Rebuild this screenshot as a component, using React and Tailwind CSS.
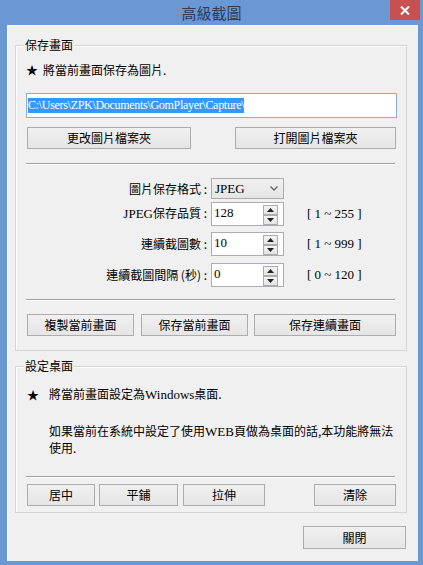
import React from 'react';

const serif = "font-['Liberation_Serif','Noto_Sans_CJK_TC',serif]";

const Btn = ({ className = '', children }) => (
  <div
    className={`h-[22px] flex items-center justify-center border border-[#acacac] bg-gradient-to-b from-[#f0f0f0] to-[#e5e5e5] text-[12px] ${className}`}
  >
    {children}
  </div>
);

const Separator = () => (
  <div className="h-[2px] border-t border-[#a0a0a0] border-b border-b-white mr-[2px]" />
);

const GroupLabel = ({ children }) => (
  <div className="absolute left-[8px] top-[-9px] px-[1px] bg-[#f0f0f0] leading-[16px] text-[12px]">
    {children}
  </div>
);

const Arrow = ({ up }) => (
  <div className="h-[10px] w-[15px] border border-[#acacac] bg-gradient-to-b from-[#f4f4f4] to-[#e4e4e4] flex items-center justify-center">
    <svg width="7" height="4" viewBox="0 0 7 4">
      {up ? <path d="M3.5 0 L7 4 L0 4 Z" fill="#222" /> : <path d="M0 0 L7 0 L3.5 4 Z" fill="#222" />}
    </svg>
  </div>
);

const Spin = ({ value }) => (
  <div className="w-[73px] h-full border border-[#abadb3] bg-white flex items-start justify-between pl-[2px] pr-[5px] pt-[2px]">
    <span className={`${serif} text-[13px] leading-[16px]`}>{value}</span>
    <div className="flex flex-col">
      <Arrow up />
      <Arrow />
    </div>
  </div>
);

const Row = ({ label, className, children, range }) => (
  <div className={`flex items-center ${className}`}>
    <div className="w-[181px] text-right text-[12px] whitespace-nowrap">{label}</div>
    <div className="ml-[4px] h-full flex">{children}</div>
    {range && <div className={`${serif} ml-[23px] text-[13px] whitespace-pre`}>{range}</div>}
  </div>
);

export default function App() {
  return (
    <div className="w-[423px] h-[565px] bg-[#6b97d3] flex flex-col font-['Noto_Sans_CJK_TC','Noto_Sans_CJK_SC',sans-serif] text-black">
      <div className="h-[25px] relative flex items-center justify-center">
        <span className="text-[15px] text-[#2d3b57] leading-none">高級截圖</span>
        <div className="absolute right-[3px] top-0 w-[30px] h-[20px] bg-[#c75050] flex items-center justify-center">
          <svg width="10" height="9" viewBox="0 0 10 9">
            <path d="M1 0.5 L9 8.5 M9 0.5 L1 8.5" stroke="#fff" strokeWidth="2" />
          </svg>
        </div>
      </div>

      <div className="ml-[7px] mr-[5px] h-[536px] bg-[#f0f0f0] border-t border-l border-[#fafafa] flex flex-col">
        {/* 保存畫面 */}
        <div className="mt-[19px] ml-[7px] w-[392px] h-[306px] relative border border-[#d5d5d5] shadow-[inset_1px_1px_0_#fff] flex flex-col pl-[10px] pr-[9px]">
          <GroupLabel>保存畫面</GroupLabel>
          <div className="mt-[16px] leading-[16px] text-[12px] flex items-center">
            <span className="text-[12px] mr-[5px]">★</span>
            <span>將當前畫面保存為圖片.</span>
          </div>
          <div className="mt-[15px] h-[25px] border border-[#89acd8] bg-white flex items-center pl-[1px]">
            <span className={`${serif} bg-[#3399ff] text-white text-[12px] leading-[15px] tracking-[-0.3px]`}>
              C:\Users\ZPK\Documents\GomPlayer\Capture\
            </span>
          </div>
          <div className="mt-[9px] flex ml-[1px]">
            <Btn className="w-[164px]">更改圖片檔案夾</Btn>
            <Btn className="w-[161px] ml-[44px]">打開圖片檔案夾</Btn>
          </div>
          <div className="mt-[14px]">
            <Separator />
          </div>

          <div className="-ml-[10px] flex flex-col">
            <Row label="圖片保存格式 :" className="mt-[13px] h-[21px] ml-[10px]">
              <div className="w-[73px] h-full border border-[#acacac] bg-gradient-to-b from-[#f0f0f0] to-[#e5e5e5] flex items-center justify-between pl-[3px] pr-[5px]">
                <span className={`${serif} text-[13px]`}>JPEG</span>
                <svg width="8" height="5" viewBox="0 0 8 5">
                  <path d="M0.5 0.5 L4 4 L7.5 0.5" stroke="#666" strokeWidth="1.4" fill="none" />
                </svg>
              </div>
            </Row>
            <Row
              label={<><span className={`${serif} text-[13px]`}>JPEG</span>保存品質 :</>}
              className="mt-[3px] h-[24px] ml-[10px]"
              range="[ 1 ~ 255 ]"
            >
              <Spin value="128" />
            </Row>
            <Row label="連續截圖數 :" className="mt-[6px] h-[24px] ml-[10px]" range="[ 1 ~ 999 ]">
              <Spin value="10" />
            </Row>
            <Row label="連續截圖間隔 (秒) :" className="mt-[7px] h-[24px] ml-[10px]" range="[ 0 ~ 120 ]">
              <Spin value="0" />
            </Row>
          </div>

          <div className="mt-[12px]">
            <Separator />
          </div>
          <div className="mt-[13px] flex ml-[1px]">
            <Btn className="w-[107px]">複製當前畫面</Btn>
            <Btn className="w-[107px] ml-[7px]">保存當前畫面</Btn>
            <Btn className="w-[142px] ml-[6px]">保存連續畫面</Btn>
          </div>
        </div>

        {/* 設定桌面 */}
        <div className="mt-[15px] ml-[7px] w-[392px] h-[147px] relative border border-[#d5d5d5] shadow-[inset_1px_1px_0_#fff] flex flex-col pl-[10px] pr-[9px]">
          <GroupLabel>設定桌面</GroupLabel>
          <div className="mt-[19px] leading-[16px] text-[12px] flex items-center">
            <span className="w-[23px] pl-[1px]">★</span>
            <span>
              將當前畫面設定為<span className={serif + ' text-[13px]'}>Windows</span>桌面.
            </span>
          </div>
          <div className="mt-[20px] ml-[23px] text-[12px] leading-[16px] whitespace-nowrap">
            如果當前在系統中設定了使用<span className={serif + ' text-[13px]'}>WEB</span>頁做為桌面的話,本功能將無法
            <br />
            使用.
          </div>
          <div className="mt-[20px]">
            <Separator />
          </div>
          <div className="mt-[6px] flex ml-[1px]">
            <Btn className="w-[68px]">居中</Btn>
            <Btn className="w-[79px] ml-[4px]">平鋪</Btn>
            <Btn className="w-[82px] ml-[5px]">拉伸</Btn>
            <Btn className="w-[82px] ml-[49px]">清除</Btn>
          </div>
        </div>

        <div className="mt-[13px] self-end mr-[12px]">
          <Btn className="w-[103px] h-[23px]">關閉</Btn>
        </div>
      </div>
    </div>
  );
}
